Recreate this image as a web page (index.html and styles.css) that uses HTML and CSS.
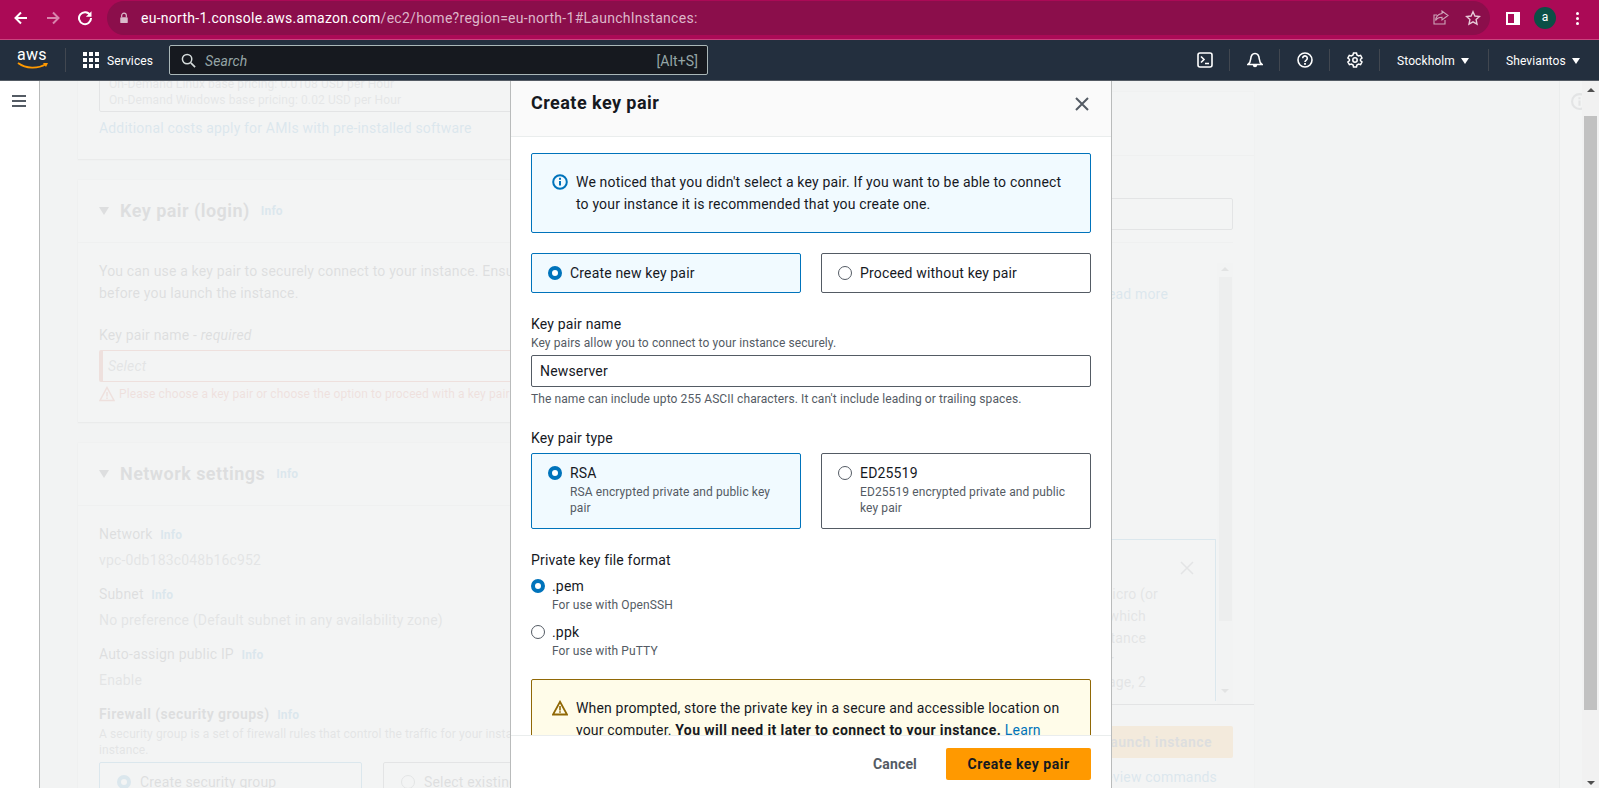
FILE: index.html
```html
<!DOCTYPE html>
<html lang="en">
<head>
  <meta charset="UTF-8" />
  <title>Launch an instance | EC2 Management Console</title>
  <link rel="stylesheet" href="styles.css">
</head>
<body>
  <!-- browser toolbar -->
  <div class="toolbar">
    <div class="toolbar-btns">
      <svg class="tb-icon" viewBox="0 0 16 16"><path d="M14 8H3M8 2.500 2.500 8 8 13.500" fill="none" stroke="#fff" stroke-width="2"/></svg>
      <svg class="tb-icon" viewBox="0 0 16 16"><path d="M2 8h11M8 2.500 13.500 8 8 13.500" fill="none" stroke="#d884ac" stroke-width="2"/></svg>
      <svg class="tb-icon" viewBox="0 0 16 16"><path d="M13.200 5.200A6 6 0 1 0 14 8" fill="none" stroke="#fff" stroke-width="2"/><path d="M14.500 1.200v5.600H8.900z" fill="#fff"/></svg>
    </div>
    <div class="omnibox">
      <svg class="lock" viewBox="0 0 12 14"><path d="M3.200 6V4a2.800 2.800 0 0 1 5.600 0v2" fill="none" stroke="#d9bccb" stroke-width="1.400"/><rect x="1.500" y="6" width="9" height="7" rx="1" fill="#d9bccb"/></svg>
      <div class="url"><span class="url-host">eu-north-1.console.aws.amazon.com</span>/ec2/home?region=eu-north-1#LaunchInstances:</div>
      <svg class="omni-icon" viewBox="0 0 16 16"><path d="M9 3.500V1l6 4.500L9 10V7.300C6 7.300 4 8.300 2.600 10.500 3 6.500 5.500 4 9 3.500z M12 10v4H1V5h3" fill="none" stroke="#cfa6bb" stroke-width="1.100"/></svg>
      <svg class="omni-icon" viewBox="0 0 16 16"><path d="m8 1.800 1.900 4.200 4.600.5-3.400 3.100.9 4.500L8 11.800l-4 2.300.9-4.500L1.500 6.500l4.600-.5z" fill="none" stroke="#e6cbd8" stroke-width="1.400"/></svg>
    </div>
    <div class="toolbar-end">
      <div class="side-panel-icon"></div>
      <div class="avatar">a</div>
      <div class="kebab"><i></i><i></i><i></i></div>
    </div>
  </div>

  <!-- aws top nav -->
  <div class="nav">
    <div class="aws-logo">
      <span>aws</span>
      <svg viewBox="0 0 32 8"><path d="M1 1c8 6 20 6 28 1" fill="none" stroke="#f90" stroke-width="1.800"/><path d="M26 1h5l-2 4z" fill="#f90"/></svg>
    </div>
    <div class="services">
      <svg class="grid-icon" viewBox="0 0 16 16" fill="#fff">
        <rect width="4" height="4"/><rect x="6" width="4" height="4"/><rect x="12" width="4" height="4"/>
        <rect y="6" width="4" height="4"/><rect x="6" y="6" width="4" height="4"/><rect x="12" y="6" width="4" height="4"/>
        <rect y="12" width="4" height="4"/><rect x="6" y="12" width="4" height="4"/><rect x="12" y="12" width="4" height="4"/>
      </svg>
      Services
    </div>
    <div class="search">
      <svg class="search-icon" viewBox="0 0 16 16"><circle cx="6.500" cy="6.500" r="5" fill="none" stroke="#d5dbdb" stroke-width="1.600"/><path d="m10.500 10.500 4.500 4.500" stroke="#d5dbdb" stroke-width="1.800"/></svg>
      <span class="search-text">Search</span>
      <span class="search-key">[Alt+S]</span>
    </div>
    <div class="nav-end">
      <div class="nav-item nav-icon"><svg viewBox="0 0 16 16"><rect x="1" y="1" width="14" height="14" rx="2" fill="none" stroke="#fff" stroke-width="1.600"/><path d="m4 4.500 3 3-3 3M8 11.500h4" fill="none" stroke="#fff" stroke-width="1.600"/></svg></div>
      <div class="nav-item nav-icon"><svg viewBox="0 0 16 16"><path d="M1 12.500h14c-2-1.500-2.500-3-2.700-5.500C12 3.500 10.500 1.500 8 1.500S4 3.500 3.700 7C3.500 9.500 3 11 1 12.500z" fill="none" stroke="#fff" stroke-width="1.600"/><path d="M5.800 13a2.200 2.200 0 0 0 4.400 0z" fill="#fff"/></svg></div>
      <div class="nav-item nav-icon"><svg viewBox="0 0 16 16"><circle cx="8" cy="8" r="7" fill="none" stroke="#fff" stroke-width="1.600"/><path d="M5.700 6.200a2.300 2.300 0 1 1 3.600 1.900c-.9.600-1.300 1-1.300 2" fill="none" stroke="#fff" stroke-width="1.600"/><rect x="7.100" y="11" width="1.800" height="1.800" fill="#fff"/></svg></div>
      <div class="nav-item nav-icon"><svg viewBox="0 0 16 16"><path d="M6.500 1h3l.4 2 1.700 1 2-.6 1.400 2.600-1.500 1.300v1.400l1.500 1.300-1.400 2.600-2-.6-1.700 1-.4 2h-3l-.4-2-1.700-1-2 .6L.9 10l1.500-1.300V7.300L.9 6l1.400-2.600 2 .6 1.700-1z" fill="none" stroke="#fff" stroke-width="1.500"/><circle cx="8" cy="8" r="2.200" fill="none" stroke="#fff" stroke-width="1.500"/></svg></div>
      <div class="nav-item nav-region">Stockholm<i class="caret"></i></div>
      <div class="nav-item nav-user">Sheviantos<i class="caret"></i></div>
    </div>
  </div>

  <div class="workspace">
    <div class="sidebar">
      <div class="hamburger"><i></i><i></i><i></i></div>
    </div>

    <div class="main">
      <!-- page behind the dialog -->
      <div class="page-content">
        <div class="form-col">
          <div class="card card-first">
            <div class="card-body">
              <div class="pricing">
                <div>On-Demand Linux base pricing: 0.0108 USD per Hour</div>
                <div>On-Demand Windows base pricing: 0.02 USD per Hour</div>
              </div>
              <a class="link line-gap">Additional costs apply for AMIs with pre-installed software</a>
            </div>
          </div>

          <div class="card">
            <div class="card-head"><i class="arrow"></i><h3>Key pair (login)</h3><a class="info-link">Info</a></div>
            <div class="card-body">
              <p class="line">You can use a key pair to securely connect to your instance. Ensure that you have access to the selected key pair<br>before you launch the instance.</p>
              <div class="line line-gap-lg">Key pair name - <em>required</em></div>
              <div class="select-error">Select</div>
              <div class="error-msg">
                <svg viewBox="0 0 16 16"><path d="M8 1.500 15 14.500H1z" fill="none" stroke="#d13212" stroke-width="1.500"/><path d="M8 6v4.500M8 11.500v1.500" stroke="#d13212" stroke-width="1.500"/></svg>
                Please choose a key pair or choose the option to proceed with a key pair
              </div>
            </div>
          </div>

          <div class="card">
            <div class="card-head"><i class="arrow"></i><h3>Network settings</h3><a class="info-link">Info</a></div>
            <div class="card-body">
              <div class="line">Network <a class="info-link">Info</a></div>
              <div class="line value">vpc-0db183c048b16c952</div>
              <div class="line field-gap">Subnet <a class="info-link">Info</a></div>
              <div class="line value">No preference (Default subnet in any availability zone)</div>
              <div class="line field-gap">Auto-assign public IP <a class="info-link">Info</a></div>
              <div class="line value">Enable</div>
              <div class="line field-gap"><b>Firewall (security groups)</b> <a class="info-link">Info</a></div>
              <div class="hint">A security group is a set of firewall rules that control the traffic for your instance. Add rules to allow specific traffic to reach your<br>instance.</div>
              <div class="sg-tiles">
                <div class="sg-tile sg-on"><i class="radio radio-on"></i>Create security group</div>
                <div class="sg-tile"><i class="radio"></i>Select existing security group</div>
              </div>
            </div>
          </div>
        </div>

        <div class="summary">
          <div class="summary-head"></div>
          <div class="summary-field"></div>
          <div class="summary-rule"></div>
          <div class="summary-scroll">
            <div class="summary-text">
              <a class="link read-more">Read more</a>
              <div class="tip">
                <div class="tip-close"><svg viewBox="0 0 14 14"><path d="m1 1 12 12M13 1 1 13" stroke="#545b64" stroke-width="1.500"/></svg></div>
                <div>t2.micro (or</div>
                <div class="tip-mid">in which</div>
                <div class="tip-mid">instance</div>
                <div class="tip-short">per</div>
                <div class="tip-mid">storage, 2</div>
              </div>
            </div>
            <div class="mini-scroll">
              <i class="mini-up"></i>
              <div class="mini-thumb"></div>
              <i class="mini-down"></i>
            </div>
          </div>
          <div class="summary-foot">
            <div class="launch-btn">Launch instance</div>
            <a class="link review">Review commands</a>
          </div>
        </div>

        <div class="tools-rail">
          <svg viewBox="0 0 16 16"><circle cx="8" cy="8" r="7" fill="none" stroke="#545b64" stroke-width="2"/><path d="M8 7v5M8 4v1.800" stroke="#545b64" stroke-width="2"/></svg>
        </div>
      </div>

      <!-- dialog -->
      <div class="modal">
        <div class="modal-head">
          <h2>Create key pair</h2>
          <svg class="modal-x" viewBox="0 0 14 14"><path d="m1 1 12 12M13 1 1 13" stroke="#545b64" stroke-width="2"/></svg>
        </div>
        <div class="modal-body">
          <div class="alert alert-info">
            <svg class="alert-icon" viewBox="0 0 16 16"><circle cx="8" cy="8" r="6.800" fill="none" stroke="#0073bb" stroke-width="2"/><path d="M8 7v4.500" stroke="#0073bb" stroke-width="2"/><rect x="7" y="3.800" width="2" height="2" fill="#0073bb"/></svg>
            <div>We noticed that you didn't select a key pair. If you want to be able to connect to your instance it is recommended that you create one.</div>
          </div>

          <div class="tiles tiles-top">
            <div class="tile tile-on tile-short"><i class="radio radio-on"></i><div class="tile-label">Create new key pair</div></div>
            <div class="tile tile-short"><i class="radio"></i><div class="tile-label">Proceed without key pair</div></div>
          </div>

          <div class="label label-gap">Key pair name</div>
          <div class="desc">Key pairs allow you to connect to your instance securely.</div>
          <div class="text-input">Newserver</div>
          <div class="desc constraint">The name can include upto 255 ASCII characters. It can't include leading or trailing spaces.</div>

          <div class="label label-gap">Key pair type</div>
          <div class="tiles">
            <div class="tile tile-on">
              <i class="radio radio-on"></i>
              <div><div class="tile-label">RSA</div><div class="desc">RSA encrypted private and public key pair</div></div>
            </div>
            <div class="tile">
              <i class="radio"></i>
              <div><div class="tile-label">ED25519</div><div class="desc">ED25519 encrypted private and public key pair</div></div>
            </div>
          </div>

          <div class="label label-gap">Private key file format</div>
          <div class="format">
            <i class="radio radio-on"></i>
            <div><div class="tile-label">.pem</div><div class="desc">For use with OpenSSH</div></div>
          </div>
          <div class="format format-next">
            <i class="radio"></i>
            <div><div class="tile-label">.ppk</div><div class="desc">For use with PuTTY</div></div>
          </div>

          <div class="alert alert-warn">
            <svg class="alert-icon" viewBox="0 0 16 16"><path d="M8 1.800 15 14.500H1z" fill="none" stroke="#906806" stroke-width="1.800"/><path d="M8 6v4.500M8 11.300v1.500" stroke="#906806" stroke-width="1.600"/></svg>
            <div>When prompted, store the private key in a secure and accessible location on your computer. <b>You will need it later to connect to your instance.</b> <a class="modal-link">Learn more</a></div>
          </div>
        </div>
        <div class="modal-foot">
          <span class="cancel">Cancel</span>
          <span class="primary">Create key pair</span>
        </div>
      </div>
    </div>

    <!-- window scrollbar -->
    <div class="page-scroll">
      <i class="scroll-up"></i>
      <div class="scroll-thumb"></div>
      <i class="scroll-down"></i>
    </div>
  </div>
</body>
</html>
```

FILE: styles.css
```css
* {
  box-sizing: border-box;
}
html, body {
  height: 100%;
}
body {
  margin: 0;
  overflow: hidden;
  font-family: "Roboto", "Liberation Sans", sans-serif;
  font-size: 14px;
  line-height: 22px;
  letter-spacing: .17px;
  color: #16191f;
  background: #f2f3f3;
  display: flex;
  flex-direction: column;
}
i {
  display: block;
  font-style: normal;
}
h2, h3, p {
  margin: 0;
}
b {
  letter-spacing: .4px;
}

/* browser toolbar */
.toolbar {
  height: 40px;
  flex: none;
  background: #ab0a56;
  border-bottom: 1px solid #c9447f;
  display: flex;
  align-items: flex-start;
}
.toolbar-btns {
  width: 107px;
  height: 36px;
  padding-left: 13px;
  display: flex;
  gap: 16px;
  align-items: center;
}
.tb-icon {
  width: 16px;
  height: 16px;
}
.omnibox {
  width: 1383px;
  height: 34px;
  margin-top: 1px;
  background: #8b0e4b;
  border-radius: 17px;
  display: flex;
  align-items: center;
  padding-left: 12px;
  padding-right: 9px;
}
.lock {
  width: 10px;
  height: 12px;
  margin-right: 12px;
}
.url {
  flex: 1;
  font-size: 14px;
  letter-spacing: .27px;
  color: #ddb6c9;
}
.url-host {
  color: #fff;
}
.omni-icon {
  width: 16px;
  height: 16px;
  margin-left: 16px;
}
.toolbar-end {
  height: 36px;
  display: flex;
  align-items: center;
  padding-left: 16px;
}
.side-panel-icon {
  width: 14px;
  height: 13px;
  border-right: 6px solid #fff;
  border-left: 2px solid #fff;
  border-top: 2px solid #fff;
  border-bottom: 2px solid #fff;
  background: #ab0a56;
}
.avatar {
  width: 22px;
  height: 22px;
  margin-left: 14px;
  border-radius: 50%;
  background: #0b4f46;
  color: #fff;
  font-size: 12px;
  line-height: 21px;
  text-align: center;
}
.kebab {
  margin-left: 20px;
  display: flex;
  flex-direction: column;
  gap: 2px;
}
.kebab i {
  width: 3px;
  height: 3px;
  border-radius: 50%;
  background: #fff;
}

/* aws nav */
.nav {
  height: 41px;
  flex: none;
  background: #232f3e;
  border-bottom: 1px solid #545b64;
  display: flex;
  align-items: center;
  color: #fff;
  font-size: 12px;
  letter-spacing: .1px;
}
.aws-logo {
  width: 66px;
  height: 24px;
  padding-left: 17px;
  border-right: 1px solid #414750;
}
.aws-logo span {
  display: block;
  font-size: 16px;
  line-height: 14px;
  letter-spacing: .2px;
}
.aws-logo svg {
  display: block;
  width: 32px;
  height: 8px;
}
.services {
  display: flex;
  align-items: center;
  gap: 8px;
  padding-left: 17px;
  width: 103px;
  padding-top: 1px;
}
.grid-icon {
  width: 16px;
  height: 16px;
  margin-top: -1px;
}
.search {
  width: 539px;
  height: 30px;
  background: #16191f;
  border: 1px solid #aab7b8;
  border-radius: 2px;
  display: flex;
  align-items: center;
  padding: 1px 9px 0 11px;
  font-size: 14px;
}
.search-icon {
  width: 15px;
  height: 15px;
  margin-top: -1px;
}
.search-text {
  flex: 1;
  margin-left: 9px;
  font-style: italic;
  color: #95a5a6;
}
.search-key {
  color: #95a5a6;
}
.nav-end {
  margin-left: auto;
  display: flex;
  align-items: center;
  height: 22px;
}
.nav-item {
  height: 22px;
  display: flex;
  align-items: center;
  justify-content: center;
  border-right: 1px solid #414750;
}
.nav-icon {
  width: 50px;
}
.nav-icon svg {
  width: 16px;
  height: 16px;
}
.nav-region {
  width: 109px;
  gap: 6px;
  justify-content: flex-start;
  padding: 1px 0 0 17px;
}
.nav-user {
  width: 110px;
  border-right: 0;
  gap: 6px;
  justify-content: flex-start;
  padding: 1px 0 0 17px;
}
.caret {
  width: 0;
  height: 0;
  border-left: 4.5px solid transparent;
  border-right: 4.5px solid transparent;
  border-top: 6px solid #fff;
}

/* page under the toolbar */
.workspace {
  flex: 1;
  display: flex;
  min-height: 0;
}
.sidebar {
  width: 40px;
  flex: none;
  background: #fff;
  border-right: 1px solid #b9bbbb;
  padding: 14px 0 0 12px;
}
.hamburger {
  display: flex;
  flex-direction: column;
  gap: 3px;
}
.hamburger i {
  width: 14px;
  height: 2px;
  background: #545b64;
}
.main {
  flex: 1;
  position: relative;
  overflow: hidden;
}
.page-content {
  opacity: .09;
  display: flex;
  align-items: flex-start;
  height: 100%;
  padding-left: 38px;
}

/* form column behind the dialog */
.form-col {
  width: 922px;
  flex: none;
  margin-top: -31px;
}
.card {
  background: #fff;
  box-shadow: 0 1px 1px rgba(0,0,0,.3), 0 0 1px rgba(0,0,0,.3);
  margin-bottom: 21px;
}
.card-head {
  height: 63px;
  display: flex;
  align-items: center;
  padding-left: 21px;
  border-bottom: 1px solid #d5dbdb;
}
.card-head h3 {
  font-size: 18px;
  letter-spacing: .45px;
  margin: 0 7px 0 11px;
}
.arrow {
  width: 0;
  height: 0;
  border-left: 5px solid transparent;
  border-right: 5px solid transparent;
  border-top: 8px solid #16191f;
}
.card-body {
  padding: 17px 21px 17px;
}
.card-first .card-body {
  padding: 20px 21px;
}
.pricing {
  border: 1px solid #545b64;
  border-radius: 2px;
  padding: 5px 9px 3px;
  font-size: 12px;
  letter-spacing: .1px;
  line-height: 16px;
  color: #687078;
}
.link {
  display: block;
  color: #0073bb;
}
.info-link {
  color: #0073bb;
  font-size: 12px;
  font-weight: 700;
  margin-left: 4px;
}
.line-gap {
  margin-top: 5px;
}
.line-gap-lg {
  margin-top: 20px;
}
.value {
  margin-top: 3px;
  color: #545b64;
}
.field-gap {
  margin-top: 12px;
}
.select-error {
  height: 32px;
  margin-top: 4px;
  padding: 4px 9px 0 5px;
  border: 1px solid #d13212;
  border-left-width: 4px;
  border-radius: 2px;
  font-style: italic;
  color: #545b64;
}
.error-msg {
  color: #d13212;
  display: flex;
  align-items: center;
  gap: 4px;
  margin-top: 1px;
  font-size: 12px;
  letter-spacing: .1px;
}
.error-msg svg {
  width: 16px;
  height: 16px;
}
.hint {
  font-size: 12px;
  letter-spacing: .1px;
  line-height: 16px;
  color: #545b64;
}
.sg-tiles {
  display: flex;
  gap: 21px;
  margin-top: 4px;
}
.sg-tile {
  width: 263px;
  height: 60px;
  border: 1px solid #545b64;
  border-radius: 2px;
  padding: 8px 17px;
  display: flex;
  gap: 9px;
}
.sg-tile .radio {
  margin-top: 4px;
}
.sg-on {
  border-color: #0073bb;
}

/* summary column, mostly hidden */
.summary {
  width: 234px;
  flex: none;
  height: 800px;
  margin-top: 11px;
  margin-left: 20px;
  background: #fff;
  box-shadow: 0 0 1px rgba(0,0,0,.3);
  padding: 0 21px;
}
.summary-head {
  height: 64px;
  margin: 0 -21px;
  border-bottom: 1px solid #d5dbdb;
}
.summary-field {
  height: 32px;
  margin-top: 42px;
  border: 1px solid #545b64;
  border-radius: 2px;
}
.summary-rule {
  height: 1px;
  margin-top: 12px;
  background: #d5dbdb;
}
.summary-scroll {
  height: 441px;
  margin-top: 20px;
  display: flex;
}
.summary-text {
  flex: 1;
  min-width: 0;
  display: flex;
  flex-direction: column;
  align-items: flex-end;
}
.read-more {
  margin-top: 20px;
  margin-right: 49px;
}
.tip {
  width: 180px;
  height: 162px;
  margin-top: 234px;
  margin-right: 1px;
  border: 1px solid #0073bb;
  border-bottom: 0;
  overflow: hidden;
  text-align: right;
  padding-right: 57px;
  color: #545b64;
}
.tip-close {
  height: 22px;
  margin-right: -36px;
  margin-top: 19px;
  margin-bottom: 2px;
}
.tip-close svg {
  width: 14px;
  height: 14px;
}
.tip-mid {
  padding-right: 12px;
}
.tip-short {
  padding-right: 44px;
}
.mini-scroll {
  width: 16px;
  flex: none;
  background: #fafafa;
  display: flex;
  flex-direction: column;
  align-items: center;
  padding-top: 4px;
}
.mini-up, .scroll-up {
  width: 0;
  height: 0;
  border-left: 4px solid transparent;
  border-right: 4px solid transparent;
  border-bottom: 4px solid #505050;
}
.mini-down, .scroll-down {
  width: 0;
  height: 0;
  border-left: 4px solid transparent;
  border-right: 4px solid transparent;
  border-top: 4px solid #505050;
}
.mini-thumb {
  width: 13px;
  height: 344px;
  margin-top: 6px;
  margin-bottom: 68px;
  background: #c1c1c1;
}
.summary-foot {
  margin: 0 -21px;
  padding: 21px 21px 0;
  border-top: 1px solid #545b64;
}
.launch-btn {
  height: 32px;
  background: #f90;
  border-radius: 2px;
  font-weight: 700;
  letter-spacing: .45px;
  line-height: 32px;
  text-align: right;
  padding-right: 21px;
}
.review {
  margin-top: 8px;
  padding-right: 16px;
  text-align: right;
}
.tools-rail {
  margin-left: auto;
  width: 23px;
  height: 100%;
  flex: none;
  background: #fff;
  border-left: 1px solid #aab7b8;
  padding: 12px 0 0 11px;
  overflow: hidden;
}
.tools-rail svg {
  width: 17px;
  height: 17px;
  display: block;
}

/* key pair dialog */
.modal {
  position: absolute;
  left: 470px;
  top: 0;
  bottom: 0;
  width: 602px;
  background: #fff;
  border-left: 1px solid #b9bbbb;
  border-right: 1px solid #b9bbbb;
  display: flex;
  flex-direction: column;
}
.modal-head {
  height: 56px;
  flex: none;
  background: #fafafa;
  border-bottom: 1px solid #eaeded;
  display: flex;
  align-items: center;
  justify-content: space-between;
  padding: 0 22px 12px 20px;
}
.modal-head h2 {
  font-size: 18px;
  font-weight: 700;
  letter-spacing: .45px;
}
.modal-x {
  width: 14px;
  height: 14px;
  margin-top: 3px;
}
.modal-body {
  flex: 1;
  min-height: 0;
  overflow: hidden;
  padding: 16px 20px 0;
}
.alert {
  display: flex;
  gap: 8px;
  padding: 17px 20px 0 20px;
  border: 1px solid #0073bb;
  border-radius: 2px;
  height: 80px;
}
.alert-info {
  background: #f1faff;
}
.alert-warn {
  margin-top: 20px;
  height: 120px;
  padding-right: 26px;
  background: #fffce9;
  border-color: #906806;
}
.alert-icon {
  width: 16px;
  height: 16px;
  flex: none;
  margin-top: 3px;
}
.tiles {
  display: flex;
  gap: 20px;
  margin-top: 4px;
}
.tiles-top {
  margin-top: 20px;
}
.tile {
  flex: 1;
  height: 76px;
  border: 1px solid #545b64;
  border-radius: 2px;
  padding: 8px 16px 0 16px;
  display: flex;
  gap: 8px;
  color: #16191f;
}
.tile-short {
  height: 40px;
}
.tile-on {
  background: #f1faff;
  border-color: #0073bb;
}
.tile-label {
  line-height: 22px;
}
.radio {
  width: 14px;
  height: 14px;
  flex: none;
  margin-top: 4px;
  border: 1px solid #545b64;
  border-radius: 50%;
  background: #fff;
}
.radio-on {
  border: 4px solid #0073bb;
}
.label {
  line-height: 22px;
}
.label-gap {
  margin-top: 20px;
}
.desc {
  font-size: 12px;
  letter-spacing: .1px;
  line-height: 16px;
  color: #545b64;
}
.text-input {
  height: 32px;
  margin-top: 4px;
  padding: 4px 8px;
  border: 1px solid #545b64;
  border-radius: 2px;
  line-height: 22px;
}
.constraint {
  margin-top: 4px;
}
.format {
  display: flex;
  gap: 7px;
  margin-top: 4px;
}
.format-next {
  margin-top: 8px;
}
.modal-link {
  color: #0073bb;
}
.modal-foot {
  height: 53px;
  flex: none;
  background: #fff;
  border-top: 1px solid #eaeded;
  display: flex;
  align-items: center;
  justify-content: flex-end;
  gap: 29px;
  padding: 3px 20px 0 0;
  font-weight: 700;
}
.cancel {
  color: #545b64;
}
.primary {
  width: 145px;
  height: 32px;
  background: #f90;
  border-radius: 2px;
  letter-spacing: .5px;
  line-height: 32px;
  text-align: center;
}

/* window scrollbar */
.page-scroll {
  width: 17px;
  flex: none;
  background: #f1f1f1;
  display: flex;
  flex-direction: column;
  align-items: center;
  padding-top: 7px;
}
.scroll-thumb {
  width: 13px;
  height: 594px;
  margin-top: 24px;
  background: #c1c1c1;
}
.scroll-down {
  margin-top: auto;
  margin-bottom: 3px;
}
```
